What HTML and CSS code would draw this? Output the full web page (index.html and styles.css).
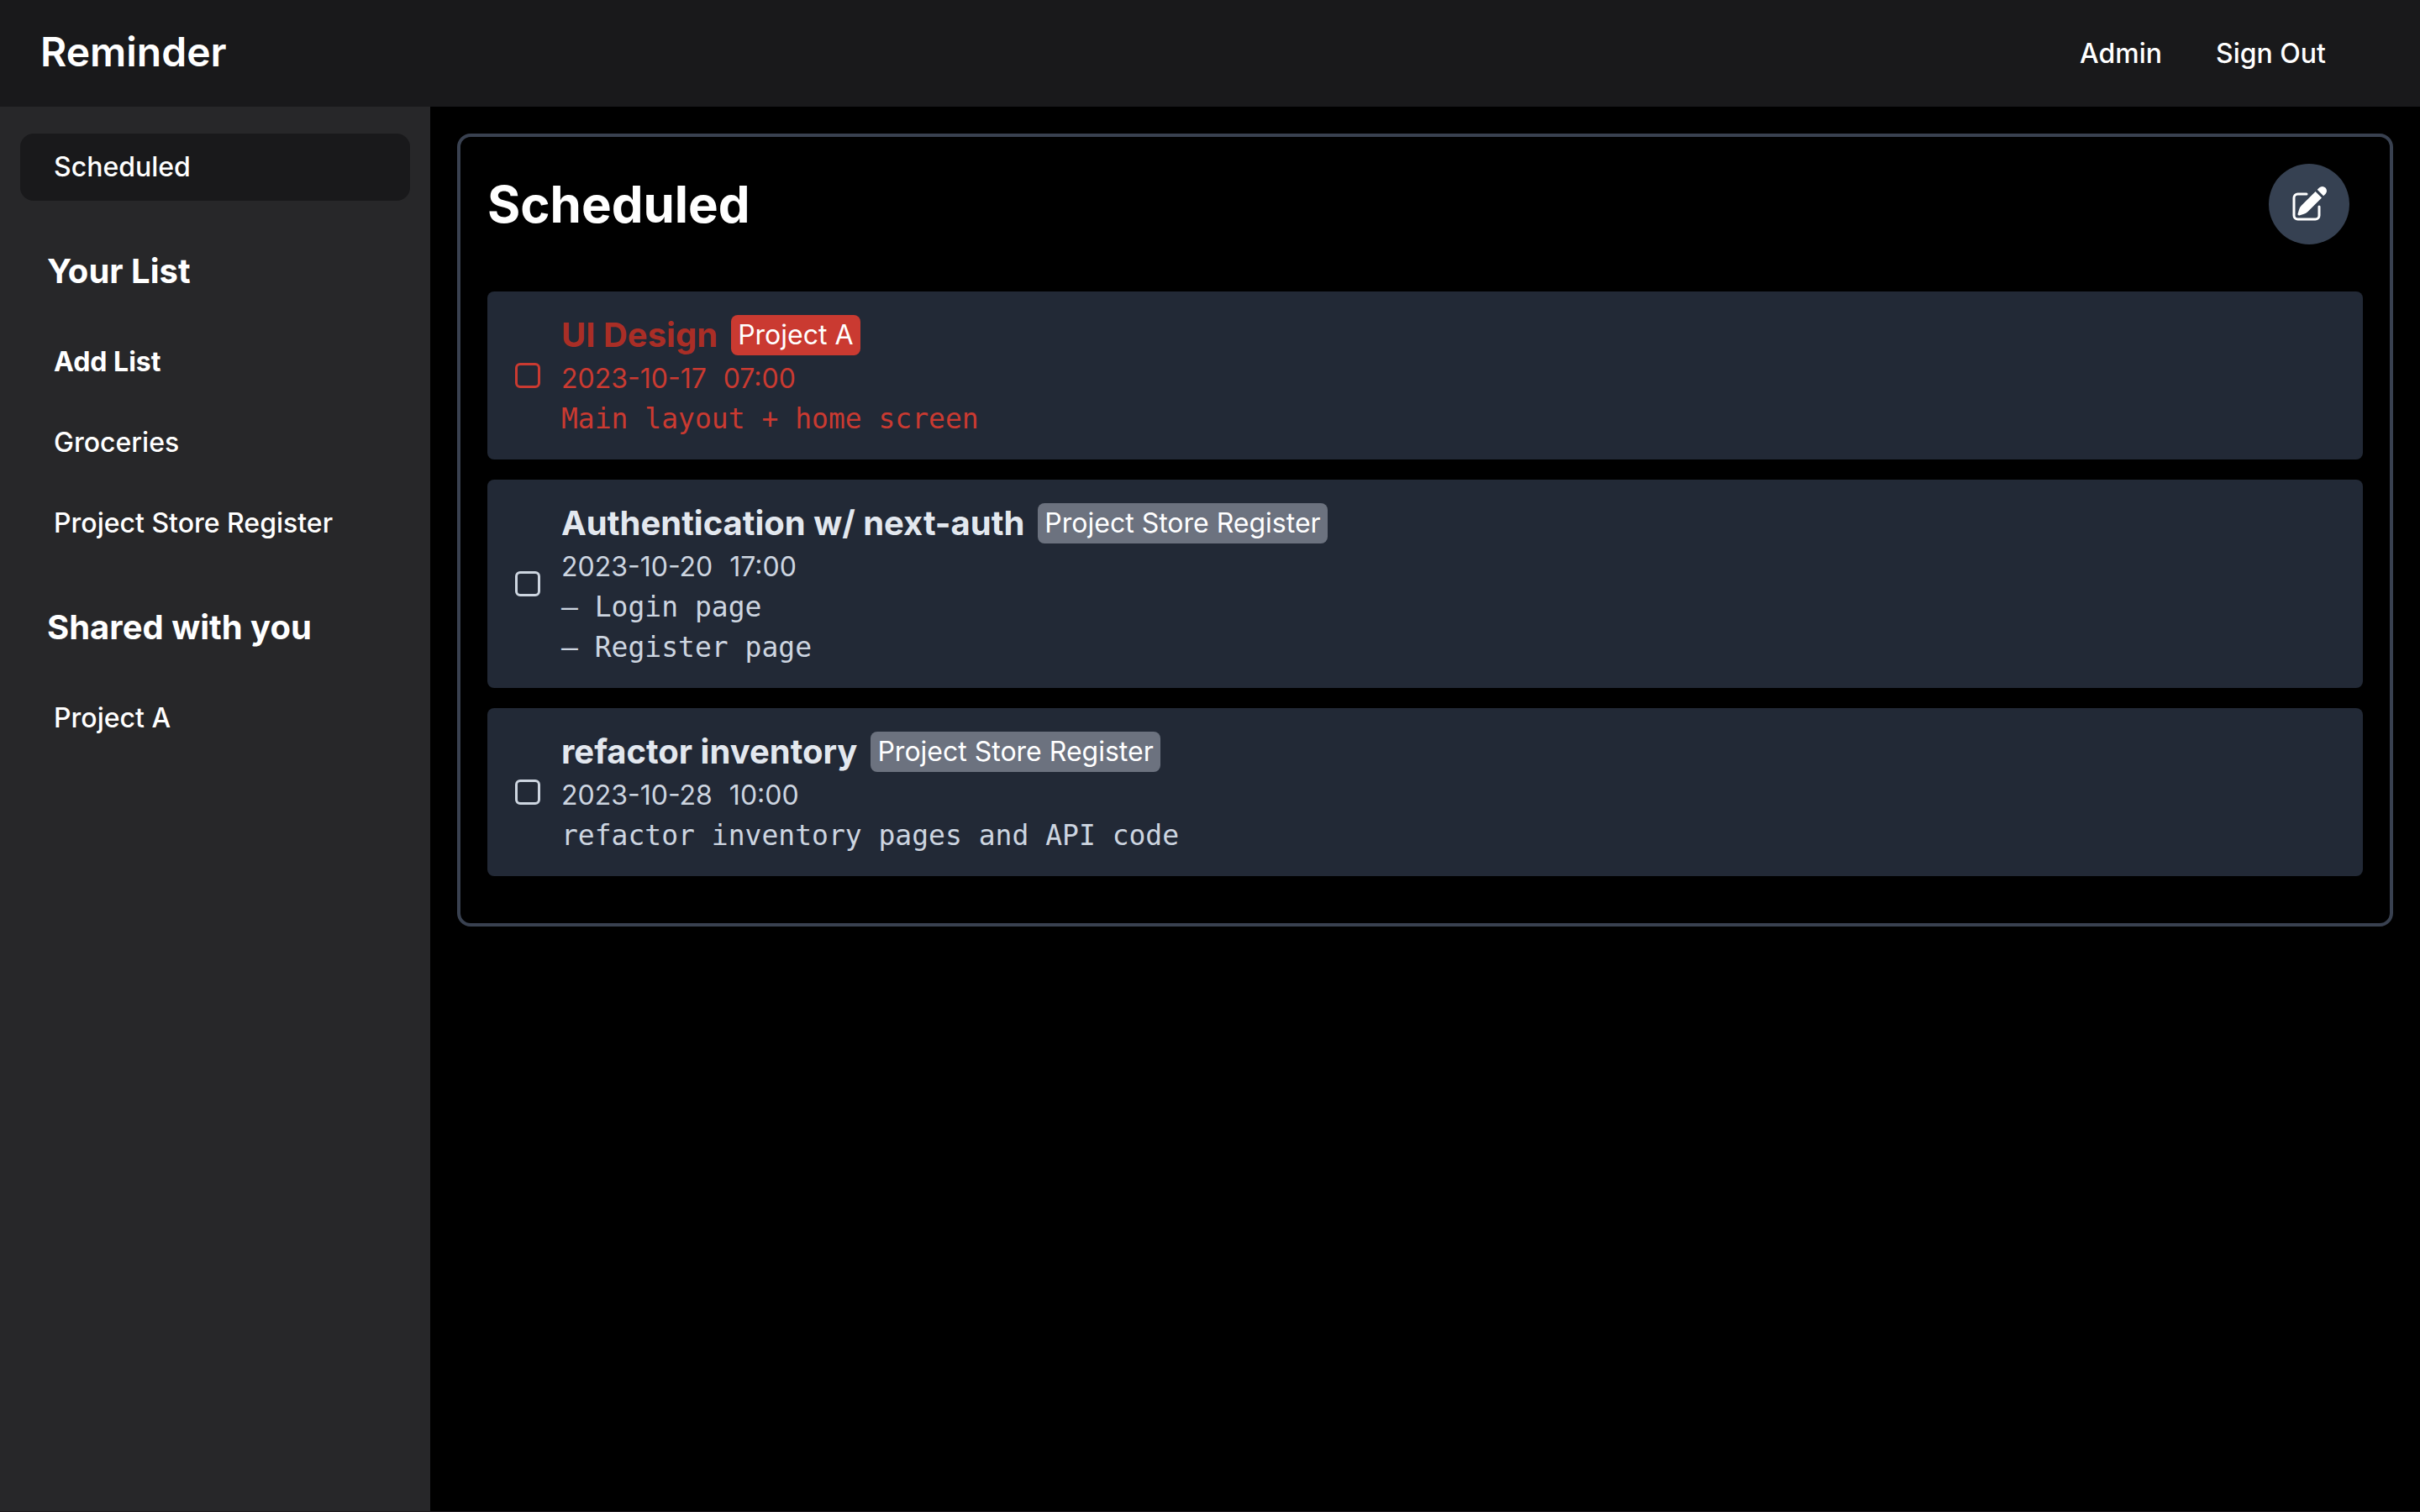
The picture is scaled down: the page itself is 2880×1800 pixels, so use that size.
FILE: index.html
```html
<!DOCTYPE html>
<html lang="en">
<head>
<meta charset="utf-8">
<meta name="viewport" content="width=device-width, initial-scale=1">
<title>Reminder</title>
<link rel="stylesheet" href="styles.css">
</head>
<body>
<header class="topbar">
  <a class="brand" href="#">Reminder</a>
  <nav class="topnav" aria-label="Account">
    <a class="topnav-link" href="#">Admin</a>
    <button class="topnav-link" type="button">Sign Out</button>
  </nav>
</header>
<div class="layout">
  <nav class="sidebar" aria-label="Lists">
    <a class="side-link is-active" href="#" aria-current="page">Scheduled</a>
    <h2 class="side-heading">Your List</h2>
    <button class="side-link side-add" type="button">Add List</button>
    <a class="side-link" href="#">Groceries</a>
    <a class="side-link" href="#">Project Store Register</a>
    <h2 class="side-heading">Shared with you</h2>
    <a class="side-link" href="#">Project A</a>
  </nav>
  <main class="content">
    <section class="panel">
      <div class="panel-head">
        <h1 class="panel-title">Scheduled</h1>
        <button class="edit-button" type="button" aria-label="New reminder">
          <svg class="edit-icon" viewBox="0 0 24 24" fill="currentColor" aria-hidden="true">
            <path d="M21.731 2.269a2.625 2.625 0 00-3.712 0l-1.157 1.157 3.712 3.712 1.157-1.157a2.625 2.625 0 000-3.712zM19.513 8.199l-3.712-3.712-8.4 8.4a5.25 5.25 0 00-1.32 2.214l-.8 2.685a.75.75 0 00.933.933l2.685-.8a5.25 5.25 0 002.214-1.32l8.4-8.4z"/>
            <path d="M5.25 5.25a3 3 0 00-3 3v10.5a3 3 0 003 3h10.5a3 3 0 003-3V13.5a.75.75 0 00-1.5 0v5.25a1.5 1.5 0 01-1.5 1.5H5.25a1.5 1.5 0 01-1.5-1.5V8.25a1.5 1.5 0 011.5-1.5h5.25a.75.75 0 000-1.5H5.25z"/>
          </svg>
        </button>
      </div>
      <ul class="reminders">
        <li class="reminder is-overdue">
          <input class="check" type="checkbox" id="r1">
          <div class="details">
            <div class="title-row">
              <label class="title" for="r1">UI Design</label>
              <span class="badge">Project A</span>
            </div>
            <div class="due"><span>2023-10-17</span><span>07:00</span></div>
            <pre class="note">Main layout + home screen</pre>
          </div>
        </li>
        <li class="reminder">
          <input class="check" type="checkbox" id="r2">
          <div class="details">
            <div class="title-row">
              <label class="title" for="r2">Authentication w/ next-auth</label>
              <span class="badge">Project Store Register</span>
            </div>
            <div class="due"><span>2023-10-20</span><span>17:00</span></div>
            <pre class="note">– Login page
– Register page</pre>
          </div>
        </li>
        <li class="reminder">
          <input class="check" type="checkbox" id="r3">
          <div class="details">
            <div class="title-row">
              <label class="title" for="r3">refactor inventory</label>
              <span class="badge">Project Store Register</span>
            </div>
            <div class="due"><span>2023-10-28</span><span>10:00</span></div>
            <pre class="note">refactor inventory pages and API code</pre>
          </div>
        </li>
      </ul>
    </section>
  </main>
</div>
</body>
</html>
```
FILE: styles.css
```css
*,
*::before,
*::after {
  box-sizing: border-box;
}

body {
  display: flex;
  flex-direction: column;
  min-height: 100vh;
  margin: 0;
  border-bottom: 1px solid #1e181d;
  background: #000;
  color: #fff;
  font-family: Inter, "Liberation Sans", sans-serif;
  font-size: 32px;
  line-height: 48px;
}

h1,
h2,
ul,
pre {
  margin: 0;
  padding: 0;
}

a {
  color: inherit;
  text-decoration: none;
}

button {
  margin: 0;
  padding: 0;
  border: 0;
  background: none;
  color: inherit;
  font: inherit;
  cursor: pointer;
}

/* Top bar */
.topbar {
  display: flex;
  align-items: center;
  justify-content: space-between;
  height: 127px;
  padding: 0 112px 0 48px;
  background: #19191b;
}

.brand {
  padding-bottom: 4px;
  font-size: 48px;
  font-weight: 600;
  line-height: 64px;
}

.topnav {
  display: flex;
  gap: 64px;
}

.topnav-link {
  font-weight: 500;
}

/* Page body */
.layout {
  display: flex;
  flex: 1;
}

.sidebar {
  display: flex;
  flex: 0 0 512px;
  flex-direction: column;
  gap: 16px;
  padding: 32px 24px;
  background: #272729;
}

.side-link {
  padding: 16px 40px;
  border-radius: 16px;
  font-weight: 500;
  text-align: left;
}

.side-link.is-active {
  background: #19191b;
}

.side-add {
  font-weight: 700;
}

.side-heading {
  padding: 40px 32px 24px;
  font-size: 40px;
  font-weight: 700;
  line-height: 56px;
}

.content {
  flex: 1;
  min-width: 0;
  padding: 32px;
}

.panel {
  padding: 32px 32px 56px;
  border: 4px solid #394150;
  border-radius: 16px;
}

.panel-head {
  display: flex;
  align-items: center;
  justify-content: space-between;
  padding-right: 16px;
}

.panel-title {
  font-size: 60px;
  font-weight: 700;
  line-height: 72px;
}

.edit-button {
  display: flex;
  padding: 24px;
  border-radius: 50%;
  background: #364152;
}

.edit-icon {
  width: 48px;
  height: 48px;
}

/* Reminder list */
.reminders {
  display: flex;
  flex-direction: column;
  gap: 24px;
  margin-top: 56px;
  list-style: none;
}

.reminder {
  display: flex;
  align-items: center;
  gap: 25px;
  padding: 24px 33px;
  border-radius: 8px;
  background: #222936;
  color: #cdd5e0;
}

.check {
  appearance: none;
  flex: none;
  width: 30px;
  height: 30px;
  margin: 0;
  border: 3px solid;
  border-radius: 6px;
  color: inherit;
}

.title-row {
  display: flex;
  align-items: center;
  gap: 16px;
}

.title {
  color: #e3e8ef;
  font-size: 40px;
  font-weight: 700;
  line-height: 56px;
}

.badge {
  padding: 0 8px;
  border-radius: 8px;
  background: #6c727f;
  color: #fff;
}

.due {
  display: flex;
  gap: 20px;
}

.note {
  font-family: "DejaVu Sans Mono", monospace;
  font-size: 33px;
  line-height: 48px;
}

.is-overdue {
  color: #ca3a31;
}

.is-overdue .title {
  color: #aa2e26;
}

.is-overdue .badge {
  background: #ca3a31;
}
```
